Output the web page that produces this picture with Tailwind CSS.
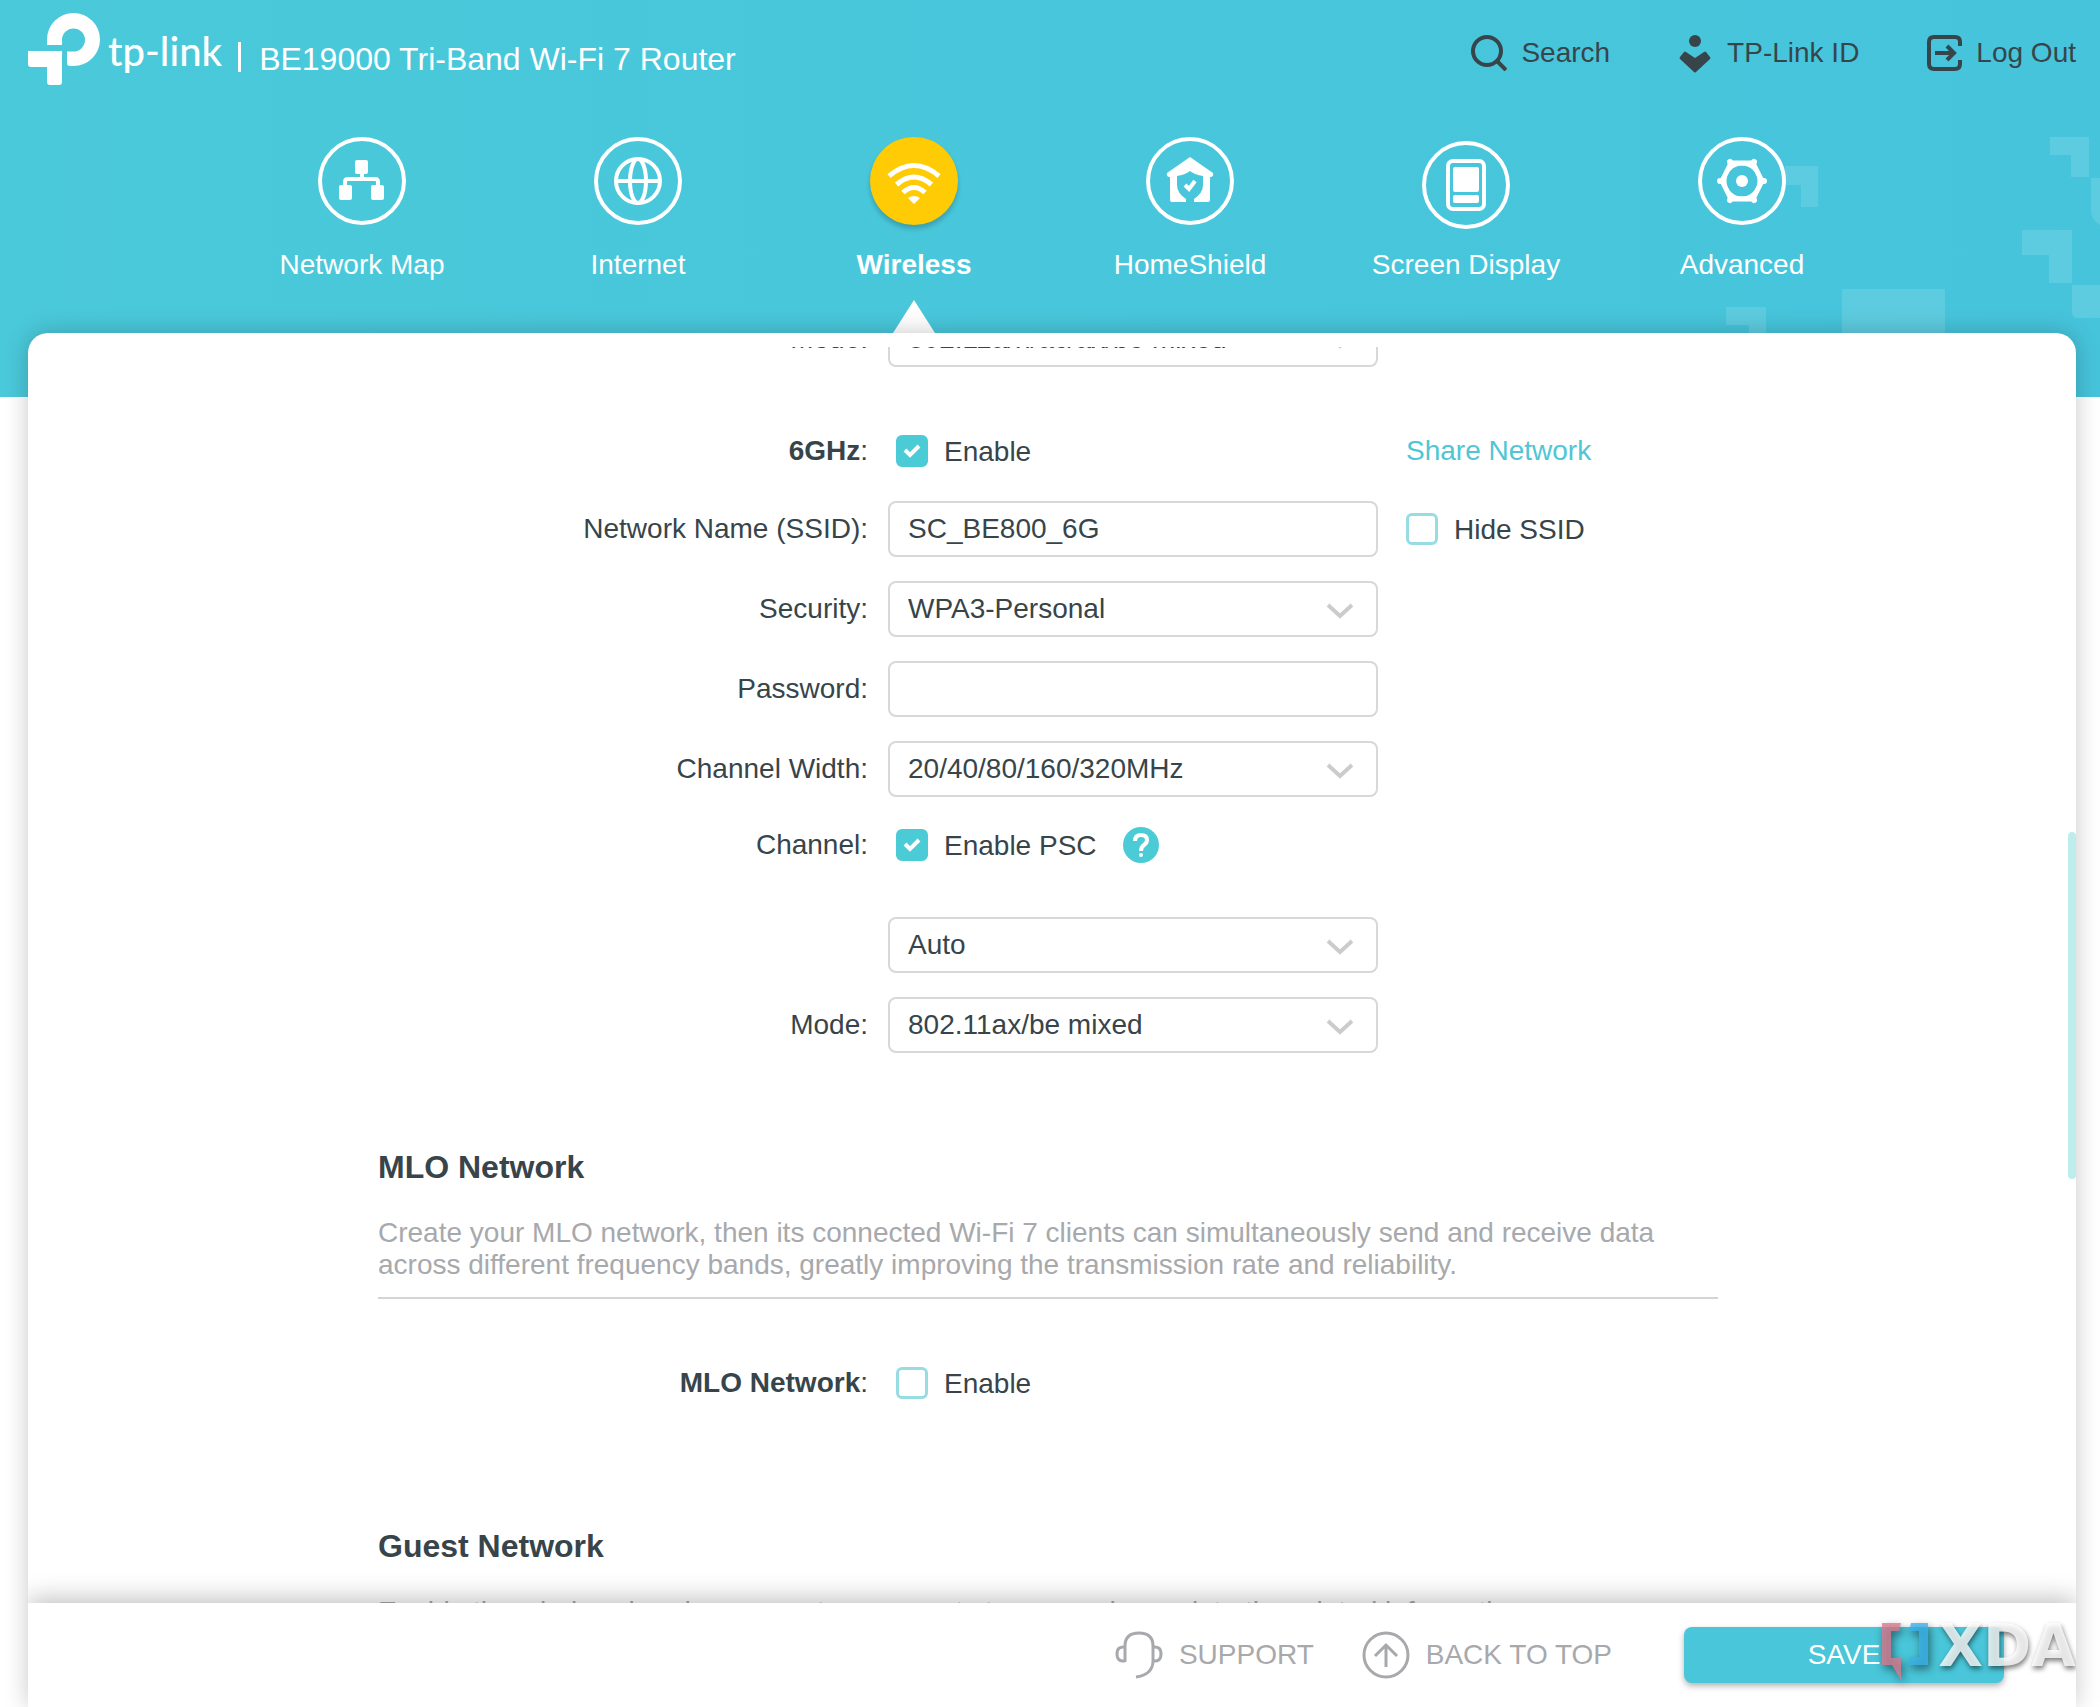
<!DOCTYPE html>
<html lang="en">
<head>
    <meta charset="UTF-8">
    <meta name="viewport" content="width=device-width, initial-scale=1.0">
    <title>Wireless - BE19000 Tri-Band Wi-Fi 7 Router</title>
    <script src="https://cdn.jsdelivr.net/npm/@tailwindcss/browser@4"></script>
</head>
<body class="relative h-screen overflow-hidden bg-white font-['Liberation_Sans',Arial,sans-serif] text-[28px] leading-9 text-[#37454a]">

    <!-- Backdrop -->
    <div class="absolute inset-x-0 top-0 h-[397px] bg-gradient-to-r from-[#4ac9da] to-[#46c4dc]">
        <svg class="absolute right-0 top-0 h-full w-[400px]" viewBox="0 0 400 397" fill="#fff" fill-opacity="0.13" aria-hidden="true">
            <path d="M85 166H118V207H101V185H85Z"/>
            <path d="M350 137H389V177H371V155H350Z"/>
            <path d="M391 178H400V225Q391 220 391 210Z"/>
            <path d="M322 230H372V283H349V255H322Z"/>
            <path d="M372 285H400V318H378Q372 318 372 312Z"/>
            <path d="M142 289H245V345H142Z"/>
            <path d="M26 307H66V345H49V325H26Z"/>
        </svg>
    </div>

    <div class="relative flex h-full flex-col pl-7 pr-6">
        <header class="flex h-[137px] shrink-0 items-start justify-between">
            <div class="flex h-[98px] items-center pt-[13px] pb-[13px] text-white">
                <svg class="size-[72px]" viewBox="0 0 72 72" fill="currentColor" aria-hidden="true">
                    <path d="M19 32V26.5A26.5 26.5 0 0 1 72 26.5A26.5 26.5 0 0 1 45.5 53H42Q39 53 39 50V38.5H45.5A11.5 11.5 0 0 0 57 27A11.5 11.5 0 0 0 34 27V32Z"/>
                    <path d="M0 38H34V69Q34 72 31 72H22Q19 72 19 69V54H3Q0 54 0 51Z"/>
                </svg>
                <span class="ml-2 mt-1 font-['Lato',sans-serif] text-[40px] font-medium leading-10">tp-link</span>
                <span class="ml-4 mt-4 h-[30px] w-[3px] bg-white"></span>
                <h1 class="ml-[18px] mt-5 text-[32px] leading-10">BE19000 Tri-Band Wi-Fi 7 Router</h1>
            </div>

            <div class="flex items-center gap-[67px] pt-[35px]">
                <button type="button" class="flex items-center gap-[14px]">
                    <svg class="size-9" viewBox="0 0 36 36" fill="none" stroke="currentColor" stroke-width="4" aria-hidden="true">
                        <circle cx="16" cy="16" r="14"/>
                        <path d="M26 26L35 35"/>
                    </svg>
                    Search
                </button>
                <button type="button" class="flex items-center gap-[14px]">
                    <svg class="size-9 overflow-visible" viewBox="0 0 36 36" fill="currentColor" aria-hidden="true">
                        <circle cx="18" cy="6" r="6"/>
                        <path d="M7 17Q8 16 9 17L18 23L27 17Q28 16 29 17L33 22Q34 23 33 24L19 37Q18 38 17 37L3 24Q2 23 3 22Z"/>
                    </svg>
                    TP-Link ID
                </button>
                <button type="button" class="flex items-center gap-[14px]">
                    <svg class="size-9 overflow-visible" viewBox="0 0 36 36" fill="none" stroke="currentColor" stroke-width="4" aria-hidden="true">
                        <path d="M34 11V7Q34 2 29 2H8Q3 2 3 7V29Q3 34 8 34H29Q34 34 34 29V25"/>
                        <path d="M9 18H27M21 11L28 18L21 25"/>
                    </svg>
                    Log Out
                </button>
            </div>
        </header>

        <!-- Main navigation -->
        <nav class="mx-auto grid h-[196px] w-full max-w-[1656px] shrink-0 grid-cols-6 text-white">
            <a href="#" class="flex flex-col items-center gap-[22px]">
                <svg class="size-[88px]" viewBox="0 0 88 88" fill="none" stroke="currentColor" stroke-width="4" aria-hidden="true">
                    <circle cx="44" cy="44" r="42"/>
                    <path d="M44 36V42M27 50V45Q27 42 30 42H57Q60 42 60 45V50"/>
                    <g fill="currentColor" stroke="none">
                        <rect x="37" y="23" width="13" height="14" rx="2"/>
                        <rect x="21" y="48" width="13" height="15" rx="2"/>
                        <rect x="53" y="48" width="13" height="15" rx="2"/>
                    </g>
                </svg>
                Network Map
            </a>
            <a href="#" class="flex flex-col items-center gap-[22px]">
                <svg class="size-[88px]" viewBox="0 0 88 88" fill="none" stroke="currentColor" stroke-width="4" aria-hidden="true">
                    <circle cx="44" cy="44" r="42"/>
                    <circle cx="44" cy="44" r="22"/>
                    <ellipse cx="44" cy="44" rx="8" ry="22"/>
                    <path d="M22 44H66"/>
                </svg>
                Internet
            </a>
            <a href="#" class="relative flex flex-col items-center gap-[22px] font-bold">
                <svg class="size-[88px] rounded-full bg-[#ffcb05] shadow-[0_4px_5px_rgba(0,0,0,0.2)]" viewBox="0 0 88 88" fill="none" stroke="currentColor" stroke-width="5" aria-hidden="true">
                    <path d="M19 39Q44 18 69 39"/>
                    <path d="M26.500 47.500Q44 32.500 61.500 47.500"/>
                    <path d="M33 55.500Q44 45.500 55 55.500"/>
                    <path fill="currentColor" stroke="none" d="M38 61Q44 57 50 61L44 67Z"/>
                </svg>
                Wireless
                <svg class="absolute bottom-0 h-[33px] w-[42px]" viewBox="0 0 42 33" fill="currentColor" aria-hidden="true">
                    <path d="M21 0L42 33H0Z"/>
                </svg>
            </a>
            <a href="#" class="flex flex-col items-center gap-[22px]">
                <svg class="size-[88px]" viewBox="0 0 88 88" fill="none" stroke="currentColor" stroke-width="4" aria-hidden="true">
                    <circle cx="44" cy="44" r="42"/>
                    <path fill="currentColor" stroke="none" fill-rule="evenodd" d="M44 20L67 36Q68 40 64 40V63Q64 65 62 65H48V62Q57 56 57 48V39Q49 38 44 34Q39 38 31 39V48Q31 56 40 62V65H26Q24 65 24 63V40Q20 40 21 36Z"/>
                    <path d="M39 48L43 52L49 44" stroke-width="4"/>
                </svg>
                HomeShield
            </a>
            <a href="#" class="flex flex-col items-center gap-[22px]">
                <svg class="size-[88px] overflow-visible" viewBox="0 -4 88 88" fill="none" stroke="currentColor" stroke-width="4" aria-hidden="true">
                    <circle cx="44" cy="44" r="42"/>
                    <rect x="26" y="20" width="36" height="48" rx="5"/>
                    <rect x="31" y="26" width="26" height="25" rx="2" fill="currentColor" stroke="none"/>
                    <rect x="31" y="54" width="26" height="8" rx="2" fill="currentColor" stroke="none"/>
                </svg>
                Screen Display
            </a>
            <a href="#" class="flex flex-col items-center gap-[22px]">
                <svg class="size-[88px]" viewBox="0 0 88 88" fill="none" stroke="currentColor" stroke-width="4" aria-hidden="true">
                    <circle cx="44" cy="44" r="42"/>
                    <path d="M24 44L33 26H55L64 44L55 62H33Z" stroke-width="5" stroke-linejoin="round"/>
                    <circle cx="44" cy="44" r="17" stroke-width="3"/>
                    <circle cx="44" cy="44" r="6" fill="currentColor" stroke="none"/>
                    <path d="M22 44H24M32 25L33 27M56 25L55 27M64 44H66M56 63L55 61M32 63L33 61" stroke-width="6" stroke-linecap="round"/>
                </svg>
                Advanced
            </a>
        </nav>

        <div class="relative flex min-h-0 flex-1 flex-col rounded-t-[20px] bg-white pt-[14px] shadow-[0_0_24px_rgba(0,0,0,0.22)]">
            <main class="relative min-h-0 flex-1 overflow-hidden pr-2">
                <!-- Page content, scrolled part of the way down -->
                <div class="mx-auto -mt-9 max-w-[1340px]">
                    <form>
                        <div class="flex items-center">
                            <label for="mode5" class="w-[490px] text-right">Mode:</label>
                            <div class="relative ml-5 w-[490px]">
                                <select id="mode5" class="h-14 w-full appearance-none rounded-lg border-2 border-[#d8d8d8] bg-white px-[18px]">
                                    <option>802.11a/n/ac/ax/be mixed</option>
                                </select>
                                <svg class="pointer-events-none absolute right-6 top-[22px] h-4 w-7" viewBox="0 0 28 16" fill="none" stroke="#cccccc" stroke-width="4" aria-hidden="true"><path d="M2 2L14 13L26 2"/></svg>
                            </div>
                        </div>

                        <div class="mt-14 flex h-14 items-center">
                            <span class="w-[490px] text-right"><b>6GHz</b>:</span>
                            <label class="ml-7 flex w-[482px] items-center gap-4">
                                <span class="relative size-8">
                                    <input type="checkbox" checked class="block size-8 appearance-none rounded-md border-2 border-[#8fdbe2] checked:border-[#4acbd6] checked:bg-[#4acbd6]">
                                    <svg class="pointer-events-none absolute inset-0 size-8" viewBox="0 0 32 32" fill="none" stroke="#fff" stroke-width="4" aria-hidden="true"><path d="M9 15L14 20L23 11"/></svg>
                                </span>
                                <span class="pt-[2px]">Enable</span>
                            </label>
                            <a href="#" class="ml-7 text-[#4fc6d4]">Share Network</a>
                        </div>

                        <div class="mt-[22px] flex items-center">
                            <label for="ssid" class="w-[490px] text-right">Network Name (SSID):</label>
                            <input id="ssid" type="text" value="SC_BE800_6G" class="ml-5 h-14 w-[490px] rounded-lg border-2 border-[#d8d8d8] px-[18px]">
                            <label class="ml-7 flex items-center gap-4">
                                <input type="checkbox" class="size-8 appearance-none rounded-md border-3 border-[#96dde3]">
                                <span class="pt-[2px]">Hide SSID</span>
                            </label>
                        </div>

                        <div class="mt-6 flex items-center">
                            <label for="security" class="w-[490px] text-right">Security:</label>
                            <div class="relative ml-5 w-[490px]">
                                <select id="security" class="h-14 w-full appearance-none rounded-lg border-2 border-[#d8d8d8] bg-white px-[18px]">
                                    <option>WPA3-Personal</option>
                                </select>
                                <svg class="pointer-events-none absolute right-6 top-[22px] h-4 w-7" viewBox="0 0 28 16" fill="none" stroke="#cccccc" stroke-width="4" aria-hidden="true"><path d="M2 2L14 13L26 2"/></svg>
                            </div>
                        </div>

                        <div class="mt-6 flex items-center">
                            <label for="password" class="w-[490px] text-right">Password:</label>
                            <input id="password" type="password" class="ml-5 h-14 w-[490px] rounded-lg border-2 border-[#d8d8d8] px-[18px]">
                        </div>

                        <div class="mt-6 flex items-center">
                            <label for="width" class="w-[490px] text-right">Channel Width:</label>
                            <div class="relative ml-5 w-[490px]">
                                <select id="width" class="h-14 w-full appearance-none rounded-lg border-2 border-[#d8d8d8] bg-white px-[18px]">
                                    <option>20/40/80/160/320MHz</option>
                                </select>
                                <svg class="pointer-events-none absolute right-6 top-[22px] h-4 w-7" viewBox="0 0 28 16" fill="none" stroke="#cccccc" stroke-width="4" aria-hidden="true"><path d="M2 2L14 13L26 2"/></svg>
                            </div>
                        </div>

                        <div class="mt-5 flex h-14 items-center">
                            <label for="channel" class="w-[490px] text-right">Channel:</label>
                            <label class="ml-7 flex items-center gap-4">
                                <span class="relative size-8">
                                    <input type="checkbox" checked class="block size-8 appearance-none rounded-md border-2 border-[#8fdbe2] checked:border-[#4acbd6] checked:bg-[#4acbd6]">
                                    <svg class="pointer-events-none absolute inset-0 size-8" viewBox="0 0 32 32" fill="none" stroke="#fff" stroke-width="4" aria-hidden="true"><path d="M9 15L14 20L23 11"/></svg>
                                </span>
                                <span class="pt-[2px]">Enable PSC</span>
                            </label>
                            <button type="button" aria-label="Help" class="ml-[26px] size-9 rounded-full bg-[#4acbd6] text-white">
                                <svg class="size-9" viewBox="0 0 36 36" fill="none" stroke="currentColor" stroke-width="4" aria-hidden="true">
                                    <path d="M12 14Q12 8 18 8Q24 8 24 13Q24 16 21 18Q18 20 18 24"/>
                                    <circle cx="18" cy="28" r="2" fill="currentColor" stroke="none"/>
                                </svg>
                            </button>
                        </div>

                        <div class="relative ml-[510px] mt-11 w-[490px]">
                            <select id="channel" class="h-14 w-full appearance-none rounded-lg border-2 border-[#d8d8d8] bg-white px-[18px]">
                                <option>Auto</option>
                            </select>
                            <svg class="pointer-events-none absolute right-6 top-[22px] h-4 w-7" viewBox="0 0 28 16" fill="none" stroke="#cccccc" stroke-width="4" aria-hidden="true"><path d="M2 2L14 13L26 2"/></svg>
                        </div>

                        <div class="mt-6 flex items-center">
                            <label for="mode6" class="w-[490px] text-right">Mode:</label>
                            <div class="relative ml-5 w-[490px]">
                                <select id="mode6" class="h-14 w-full appearance-none rounded-lg border-2 border-[#d8d8d8] bg-white px-[18px]">
                                    <option>802.11ax/be mixed</option>
                                </select>
                                <svg class="pointer-events-none absolute right-6 top-[22px] h-4 w-7" viewBox="0 0 28 16" fill="none" stroke="#cccccc" stroke-width="4" aria-hidden="true"><path d="M2 2L14 13L26 2"/></svg>
                            </div>
                        </div>
                    </form>

                    <section class="mt-[94px]">
                        <h2 class="text-[32px] font-bold leading-10">MLO Network</h2>
                        <p class="mt-[30px] border-b-2 border-[#d4d4d4] pb-4 leading-8 text-[#a7a9ac]">Create your MLO network, then its connected Wi-Fi 7 clients can simultaneously send and receive data across different frequency bands, greatly improving the transmission rate and reliability.</p>
                        <div class="mt-14 flex h-14 items-center">
                            <span class="w-[490px] text-right"><b>MLO Network</b>:</span>
                            <label class="ml-7 flex items-center gap-4">
                                <input type="checkbox" class="size-8 appearance-none rounded-md border-3 border-[#96dde3]">
                                <span class="pt-[2px]">Enable</span>
                            </label>
                        </div>
                    </section>

                    <section class="mt-[115px]">
                        <h2 class="text-[32px] font-bold leading-10">Guest Network</h2>
                        <p class="mt-[30px] leading-8 text-[#a7a9ac]">Enable the wireless bands you want your guests to use and complete the related information.</p>
                    </section>
                </div>

                <!-- Scrollbar thumb -->
                <div class="absolute right-0 top-[485px] h-[347px] w-2 rounded-full bg-[#bdeeed]"></div>
            </main>

            <footer class="relative flex h-[104px] shrink-0 items-center justify-end gap-12 bg-white pr-[72px] text-[#a7a9ac] shadow-[0_-4px_24px_rgba(0,0,0,0.25)] [clip-path:inset(-60px_0_0_0)]">
                <button type="button" class="flex items-center gap-4">
                    <svg class="size-12" viewBox="0 0 48 48" fill="none" stroke="currentColor" stroke-width="3" aria-hidden="true">
                        <path d="M10 31V15Q10 2 24 2Q38 2 38 15V31Q37 44 21 46"/>
                        <path d="M10 16Q2 15 2 23Q2 31 10 30M38 16Q46 15 46 23Q46 31 38 30"/>
                    </svg>
                    SUPPORT
                </button>
                <button type="button" class="flex items-center gap-4">
                    <svg class="size-12" viewBox="0 0 48 48" fill="none" stroke="currentColor" stroke-width="3" aria-hidden="true">
                        <circle cx="24" cy="24" r="22"/>
                        <path d="M24 36V14M13 25L24 14L35 25"/>
                    </svg>
                    BACK TO TOP
                </button>
                <button type="button" class="ml-6 h-14 w-80 rounded-lg bg-[#49c6d9] text-white shadow-[0_3px_6px_rgba(0,0,0,0.3)]">SAVE</button>

                <!-- Watermark -->
                <div class="absolute right-0 top-[14px] flex items-start gap-[10px]">
                    <svg class="mt-1.5 h-[58px] w-[46px] drop-shadow-[2px_4px_4px_rgba(0,0,0,0.6)]" viewBox="0 0 46 58" aria-hidden="true">
                        <path fill="#d9798f" fill-opacity="0.8" d="M0 0H19L17 8H9V35H19V57L10 42H0Z"/>
                        <path fill="#3bb2ea" fill-opacity="0.8" d="M29 0H46V42H27V34H37V8H27Z"/>
                    </svg>
                    <span class="font-['DejaVu_Sans',sans-serif] text-[58px] font-bold leading-[58px] text-white/80 [text-shadow:1px_3px_5px_rgba(0,0,0,0.5)]">XDA</span>
                </div>
            </footer>
        </div>
    </div>
</body>
</html>
